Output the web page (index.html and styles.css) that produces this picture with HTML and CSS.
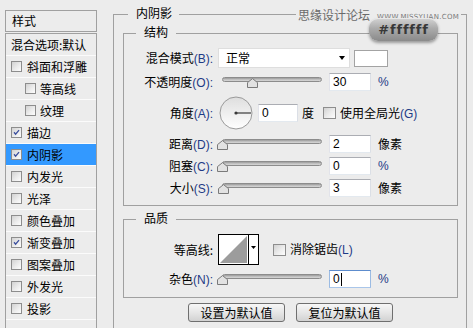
FILE: index.html
```html
<!DOCTYPE html>
<html lang="zh-CN">
<head>
<meta charset="utf-8">
<title>图层样式 - 内阴影</title>
<link rel="stylesheet" href="styles.css">
</head>
<body>
<div class="page">
  <aside class="sidebar">
    <div class="sb-head">样式</div>
    <ul class="sb-list">
      <li class="sb-row plain">混合选项:默认</li>
      <li class="sb-row"><span class="cb"></span>斜面和浮雕</li>
      <li class="sb-row sub"><span class="cb"></span>等高线</li>
      <li class="sb-row sub"><span class="cb"></span>纹理</li>
      <li class="sb-row"><span class="cb"><svg viewBox="0 0 11 11"><path d="M2.5 5.2 L4.4 7.6 L8.6 2.6"/></svg></span>描边</li>
      <li class="sb-row sel"><span class="cb"><svg viewBox="0 0 11 11"><path d="M2.5 5.2 L4.4 7.6 L8.6 2.6"/></svg></span>内阴影</li>
      <li class="sb-row"><span class="cb"></span>内发光</li>
      <li class="sb-row"><span class="cb"></span>光泽</li>
      <li class="sb-row"><span class="cb"></span>颜色叠加</li>
      <li class="sb-row"><span class="cb"><svg viewBox="0 0 11 11"><path d="M2.5 5.2 L4.4 7.6 L8.6 2.6"/></svg></span>渐变叠加</li>
      <li class="sb-row"><span class="cb"></span>图案叠加</li>
      <li class="sb-row"><span class="cb"></span>外发光</li>
      <li class="sb-row"><span class="cb"></span>投影</li>
      <li class="sb-row empty"></li>
    </ul>
  </aside>

  <main class="main">
    <section class="group outer">
      <div class="gtitle outer-title">内阴影</div>

      <section class="group inner struct">
        <div class="gtitle inner-title">结构</div>

        <div class="row r-blend">
          <span class="lbl">混合模式<span class="key">(B):</span></span>
          <div class="select"><span>正常</span><span class="arrow"></span></div>
          <div class="swatch"></div>
        </div>

        <div class="row r-std r-opacity">
          <span class="lbl">不透明度<span class="key">(O):</span></span>
          <div class="slider"><div class="track"></div><svg class="thumb" style="left:24.5px" viewBox="0 0 11 10"><path d="M0.5 9.5 V4.6 L5.5 0.6 L10.5 4.6 V9.5 Z"/></svg></div>
          <div class="num">30</div>
          <span class="unit key">%</span>
        </div>

        <div class="row r-angle">
          <span class="lbl">角度<span class="key">(A):</span></span>
          <svg class="dial" viewBox="0 0 34 34">
            <defs>
              <linearGradient id="dg" x1="0" y1="0" x2="0" y2="1">
                <stop offset="0" stop-color="#dedede"/>
                <stop offset="1" stop-color="#ffffff"/>
              </linearGradient>
            </defs>
            <circle cx="17" cy="17" r="16" fill="url(#dg)" stroke="#9a9a9a" stroke-width="1"/>
            <line x1="17" y1="17" x2="32" y2="17" stroke="#3a3a3a" stroke-width="1.2"/>
            <circle cx="17" cy="17" r="1.6" fill="#3a3a3a"/>
          </svg>
          <div class="num num-angle">0</div>
          <span class="deg">度</span>
          <span class="cb cb-lg"></span>
          <span class="cb-text">使用全局光<span class="key">(G)</span></span>
        </div>

        <div class="row r-std r-dist">
          <span class="lbl">距离<span class="key">(D):</span></span>
          <div class="slider"><div class="track"></div><svg class="thumb" style="left:-4.7px" viewBox="0 0 11 10"><path d="M0.5 9.5 V4.6 L5.5 0.6 L10.5 4.6 V9.5 Z"/></svg></div>
          <div class="num">2</div>
          <span class="unit">像素</span>
        </div>

        <div class="row r-std r-choke">
          <span class="lbl">阻塞<span class="key">(C):</span></span>
          <div class="slider"><div class="track"></div><svg class="thumb" style="left:-5.5px" viewBox="0 0 11 10"><path d="M0.5 9.5 V4.6 L5.5 0.6 L10.5 4.6 V9.5 Z"/></svg></div>
          <div class="num">0</div>
          <span class="unit key">%</span>
        </div>

        <div class="row r-std r-size">
          <span class="lbl">大小<span class="key">(S):</span></span>
          <div class="slider"><div class="track"></div><svg class="thumb" style="left:-4.3px" viewBox="0 0 11 10"><path d="M0.5 9.5 V4.6 L5.5 0.6 L10.5 4.6 V9.5 Z"/></svg></div>
          <div class="num">3</div>
          <span class="unit">像素</span>
        </div>
      </section>

      <section class="group inner quality">
        <div class="gtitle inner-title">品质</div>

        <div class="row r-contour">
          <span class="lbl">等高线:</span>
          <svg class="contour" viewBox="0 0 41 31">
            <rect x="0.5" y="0.5" width="40" height="30" fill="#fff" stroke="#000"/>
            <polygon points="2,29 29,2 29,29" fill="#9c9c9c"/>
            <line x1="30.5" y1="0.5" x2="30.5" y2="30.5" stroke="#000"/>
            <polygon points="33,12 38,12 35.5,15" fill="#000"/>
          </svg>
          <span class="cb cb-lg cb-aa"></span>
          <span class="cb-text">消除锯齿<span class="key">(L)</span></span>
        </div>

        <div class="row r-std r-noise">
          <span class="lbl">杂色<span class="key">(N):</span></span>
          <div class="slider"><div class="track"></div><svg class="thumb" style="left:-5.5px" viewBox="0 0 11 10"><path d="M0.5 9.5 V4.6 L5.5 0.6 L10.5 4.6 V9.5 Z"/></svg></div>
          <div class="num focus">0<span class="caret"></span></div>
          <span class="unit key">%</span>
        </div>
      </section>

      <div class="buttons">
        <button class="btn">设置为默认值</button>
        <button class="btn">复位为默认值</button>
      </div>
    </section>
  </main>

  <div class="watermark">思缘设计论坛<span class="wm-url">WWW.MISSYUAN.COM</span></div>
  <div class="badge">#ffffff</div>
</div>
</body>
</html>
```

FILE: styles.css
```css
* { box-sizing: border-box; }

html, body {
  margin: 0;
  padding: 0;
}

body {
  width: 473px;
  height: 328px;
  overflow: hidden;
  background: #ececec;
  color: #000;
  font-family: "Noto Sans CJK SC", "Microsoft YaHei", sans-serif;
  font-size: 12px;
  line-height: 16px;
}

.page {
  position: relative;
  display: flex;
  align-items: flex-start;
  height: 328px;
  padding: 10px 0 0 5px;
}

/* ---------- sidebar ---------- */
.sidebar {
  flex: none;
  width: 92px;
  height: 330px;
  display: flex;
  flex-direction: column;
}

.sb-head {
  height: 23px;
  border: 1px solid #a0a0a0;
  padding-left: 6px;
  line-height: 20px;
}

.sb-list {
  list-style: none;
  margin: 1px 0 0;
  padding: 0;
  flex: 1;
  border: 1px solid #a0a0a0;
  border-bottom: none;
}

.sb-row {
  height: 22px;
  border-bottom: 1px solid #fbfbfb;
  display: flex;
  align-items: center;
  padding-left: 5px;
  gap: 5px;
  white-space: nowrap;
}

.sb-row.sub {
  padding-left: 19px;
  gap: 4px;
}

.sb-row.sel {
  background: #3399ff;
}

.cb {
  flex: none;
  width: 11px;
  height: 11px;
  border: 1px solid #8d8d8d;
  background: linear-gradient(135deg, #d2d2d2 0%, #ececec 55%, #fdfdfd 100%);
  display: inline-flex;
}

.cb svg {
  width: 9px;
  height: 9px;
  fill: none;
  stroke: #3b4f9e;
  stroke-width: 1.6;
}

.cb-lg {
  width: 13px;
  height: 12px;
}

/* ---------- main groups ---------- */
.main {
  margin-left: 16px;
  margin-top: 4px;
}

.group {
  border: 1px solid #a0a0a0;
}

.outer {
  width: 354px;
  height: 330px;
  padding: 0 8px 0 9px;
}

.gtitle {
  width: max-content;
  margin-top: -10px;
  background: #ececec;
  line-height: 16px;
}

.outer-title {
  margin-left: 5px;
  padding: 0 7px 0 8px;
}

.inner-title {
  margin-left: 12px;
  padding: 0 8px;
}

.struct {
  margin-top: 12px;
  padding-bottom: 8px;
}

.quality {
  margin-top: 13px;
  padding-bottom: 9px;
}

.row {
  display: flex;
  align-items: center;
  white-space: nowrap;
}

.lbl {
  flex: none;
  width: 89px;
  margin-right: 5px;
  text-align: right;
}

.key {
  color: #1e3a86;
  font-family: "Liberation Sans", Arial, sans-serif;
}

.r-blend {
  height: 22px;
  margin-top: 7px;
}

.r-std {
  height: 18px;
  margin-top: 4px;
}

.r-dist {
  margin-top: 5px;
}

.r-angle {
  height: 34px;
  margin-top: 5px;
}

.r-contour {
  height: 31px;
  margin-top: 8px;
}

.r-noise {
  margin-top: 5px;
}

/* select + swatch */
.select {
  flex: none;
  width: 132px;
  height: 20px;
  background: #fff;
  border: 1px solid #dedede;
  padding: 0 4px 0 7px;
  display: flex;
  align-items: center;
  justify-content: space-between;
}

.arrow {
  width: 0;
  height: 0;
  border-left: 3.5px solid transparent;
  border-right: 3.5px solid transparent;
  border-top: 4px solid #000;
}

.swatch {
  flex: none;
  width: 34px;
  height: 17px;
  margin-left: 4px;
  background: #fff;
  border: 1px solid #a3a3a3;
}

/* slider */
.slider {
  position: relative;
  flex: none;
  width: 100px;
  height: 18px;
  margin-left: 4px;
  margin-right: 7px;
}

.track {
  margin-top: 4px;
  height: 5px;
  border-radius: 3px;
  border: 1px solid #8c8c8c;
  background: linear-gradient(#9a9a9a, #c6c6c6 60%, #d6d6d6);
}

.thumb {
  position: absolute;
  top: 5px;
  width: 11px;
  height: 10px;
}

.thumb path {
  fill: #e2e2e2;
  stroke: #7a7a7a;
  stroke-width: 1;
}

/* number inputs */
.num {
  flex: none;
  width: 42px;
  height: 18px;
  background: #fff;
  border: 1px solid;
  border-color: #abadb3 #dbdfe6 #e3e9ef #e2e3ea;
  padding-left: 3px;
  font-family: "Liberation Sans", Arial, sans-serif;
  font-size: 12px;
  line-height: 16px;
  display: flex;
  align-items: center;
}

.num.focus {
  border-color: #5d8ccd #9bbbe3 #a9c6ea #9bbbe3;
}

.caret {
  display: inline-block;
  width: 1px;
  height: 13px;
  margin-left: 1px;
  background: #000;
}

.unit {
  margin-left: 7px;
}

/* angle row */
.dial {
  flex: none;
  width: 34px;
  height: 34px;
  margin-left: 1px;
}

.num-angle {
  width: 40px;
  margin-left: 5px;
}

.deg {
  margin-left: 4px;
}

.r-angle .cb-lg {
  margin-left: 9px;
}

.cb-text {
  margin-left: 4px;
}

/* contour */
.contour {
  flex: none;
  width: 41px;
  height: 31px;
}

.cb-aa {
  margin-left: 14px;
}

/* buttons */
.buttons {
  display: flex;
  justify-content: center;
  gap: 11px;
  margin-top: 5px;
}

.btn {
  width: 97px;
  height: 19px;
  padding: 0;
  border: 1px solid #6f6f6f;
  border-radius: 3px;
  background: linear-gradient(#f7f7f7, #e6e6e6 50%, #d2d2d2);
  font-family: "Noto Sans CJK SC", sans-serif;
  font-size: 12px;
  line-height: 16px;
  color: #000;
}

/* overlays */
.watermark {
  position: absolute;
  left: 296px;
  top: 7px;
  width: max-content;
  white-space: nowrap;
  padding: 0 2px;
  background: #ececec;
  color: #6a6a6a;
  font-size: 12px;
  line-height: 16px;
  display: flex;
  align-items: center;
  gap: 7px;
}

.wm-url {
  font-family: "DejaVu Sans", Verdana, sans-serif;
  font-size: 7px;
  line-height: 8px;
  margin-top: 3px;
  letter-spacing: 0.3px;
  color: #7a7a7a;
}

.badge {
  position: absolute;
  left: 369px;
  top: 18px;
  width: 69px;
  height: 23px;
  border-radius: 9px;
  background: linear-gradient(#d4d4d4, #ababab 45%, #8a8a8a);
  box-shadow: 0 2px 3px rgba(0, 0, 0, 0.35), inset 0 1px 0 rgba(255, 255, 255, 0.5);
  color: #383838;
  font-family: "DejaVu Sans", Verdana, sans-serif;
  font-weight: bold;
  font-size: 13px;
  line-height: 23px;
  letter-spacing: 0.8px;
  text-align: center;
}
```
